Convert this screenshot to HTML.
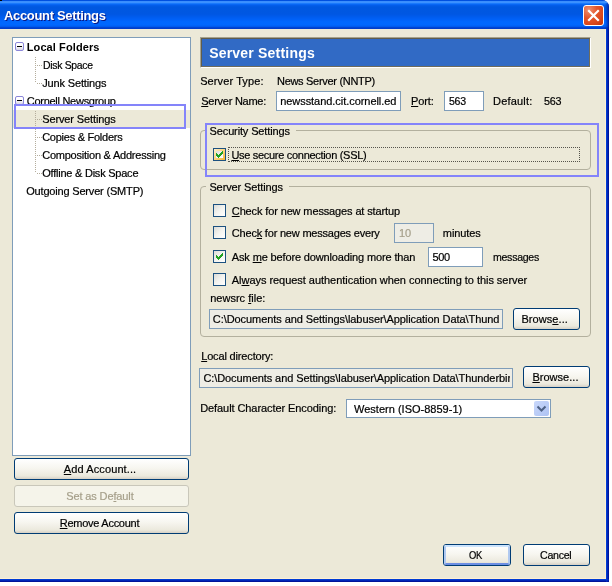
<!DOCTYPE html>
<html>
<head>
<meta charset="utf-8">
<title>Account Settings</title>
<style>
html,body{margin:0;padding:0;}
body{width:612px;height:586px;background:#fff;overflow:hidden;position:relative;font-family:"Liberation Sans",sans-serif;font-size:11px;color:#000;}
.abs{position:absolute;}
#win{will-change:transform;position:absolute;left:0;top:0;width:609px;height:582px;background:linear-gradient(135deg,#0048e0 0%,#0048e0 50%,#0a1e9c 50%,#0a1e9c 100%);border-radius:0 7px 0 0;overflow:hidden;}
#corner-l{position:absolute;left:0;top:0;width:2px;height:1px;background:#000;}
#titlebar{position:absolute;left:0;top:0;width:609px;height:29px;
 background:linear-gradient(to bottom,#0050e0 0px,#0050e0 1px,#3a8dfb 1.2px,#3c91ff 2.5px,#1a7afc 3.5px,#0866f4 4.5px,#035de9 5.5px,#0058e0 7px,#0057e2 14px,#005aea 16px,#0060f6 19px,#0068ff 22px,#0067fe 25px,#005bee 26.5px,#0045d4 27.5px,#003ac6 29px);}
#title{position:absolute;left:4px;top:8px;font-weight:bold;font-size:13px;line-height:16px;letter-spacing:-0.33px;color:#fff;text-shadow:1px 1px 0 #0a1883;white-space:nowrap;}
#close{position:absolute;left:583px;top:5px;width:19px;height:19px;border:1px solid #fff;border-radius:3px;
 background:radial-gradient(circle at 25% 20%,#ef9070 0%,#e3552c 40%,#dd4a1e 65%,#c23208 100%);}
#client{position:absolute;left:0;top:29px;width:605px;height:549px;background:#ece9d8;border-right:1px solid #fff0d2;border-bottom:1px solid #fff0d2;}
#rb{position:absolute;left:606px;top:29px;width:3px;height:553px;background:linear-gradient(to right,#0046e2 0%,#0024b4 55%,#000a8a 100%);}
#bb{position:absolute;left:0;top:579px;width:609px;height:3px;background:linear-gradient(to bottom,#0046e2 0%,#0024b4 55%,#000a8a 100%);}
#bc{position:absolute;left:606px;top:579px;width:3px;height:3px;background:linear-gradient(135deg,#0046e2 0%,#0024b4 55%,#000a8a 100%);}
.t{-webkit-text-stroke:0.2px;position:absolute;white-space:nowrap;line-height:14px;height:14px;}
u{text-decoration:underline;}
#tree{position:absolute;left:12px;top:37px;width:177px;height:417px;border:1px solid #7f9db9;background:#fff;}
.tw{position:absolute;left:0;top:0;}
.pm{position:absolute;width:7px;height:7px;border:1px solid #8a86d8;border-radius:2px;background:linear-gradient(to bottom,#fff 40%,#d8d6e4 100%);}
.pm:after{content:"";position:absolute;left:1px;top:3px;width:5px;height:1px;background:#000;}
.vdot{position:absolute;width:1px;background-image:linear-gradient(to bottom,#b4ad9c 50%,transparent 50%);background-size:1px 2px;}
.hdot{position:absolute;height:1px;background-image:linear-gradient(to right,#b4ad9c 50%,transparent 50%);background-size:2px 1px;}
.btn{position:absolute;box-sizing:border-box;border:1px solid #003c74;border-radius:3px;
 background:linear-gradient(to bottom,#fff 0%,#f7f6f0 45%,#ebe9dd 85%,#d6d0c5 100%);text-align:center;line-height:19px;white-space:nowrap;}
.btn.dis{border-color:#c9c7ba;background:#f5f4ea;color:#a8a696;}
.btn.def:after{content:"";position:absolute;left:0;top:0;right:0;bottom:0;border:2px solid;border-color:#cbe3fd #b0c9f0 #6d8fe3 #b0c9f0;border-radius:2px;}
.inp{position:absolute;box-sizing:border-box;border:1px solid #7f9db9;background:#fff;white-space:nowrap;overflow:hidden;}
.inp.ro{background:#eeede5;}
.cb{position:absolute;width:11px;height:11px;border:1px solid #1c5180;background:linear-gradient(135deg,#dcdcd7 0%,#f3f3ef 50%,#fff 100%);}
.gb{position:absolute;box-sizing:border-box;border:1px solid #b3b09e;border-radius:4px;}
.gl{position:absolute;background:#ece9d8;}
.dt{color:#a59f8a;}
.cb.hot{box-shadow:none;background:linear-gradient(135deg,#fff0cf 0%,#fbd37c 50%,#f8b330 100%);}
.cb.hot:after{content:"";position:absolute;left:2px;top:2px;width:7px;height:7px;background:linear-gradient(135deg,#deded9,#fff);}
.ann{position:absolute;box-sizing:border-box;border:2px solid #8484fa;}
</style>
</head>
<body>
<div id="win">
 <div id="titlebar"></div>
 <div id="corner-l"></div>
 <div class="abs" style="left:605px;top:3px;width:4px;height:26px;background:linear-gradient(to right,rgba(0,20,150,0) 0%,rgba(0,20,150,0.35) 50%,rgba(0,14,130,0.8) 100%)"></div>
 <div id="title">Account Settings</div>
 <div id="close"><svg width="19" height="19" viewBox="0 0 19 19" style="position:absolute;left:0;top:0"><path d="M5 5 L14 14 M14 5 L5 14" stroke="#fff" stroke-width="2.2" stroke-linecap="square" fill="none"/></svg></div>
 <div id="client"></div>
 <div id="rb"></div><div id="bb"></div><div id="bc"></div>

 <!-- tree -->
 <div id="tree"></div>
 <div class="abs" id="sel" style="left:13px;top:110px;width:177px;height:18px;background:#ece9d8"></div>
 <div class="pm" style="left:15px;top:42px"></div>
 <div class="pm" style="left:15px;top:96px"></div>
 <div class="vdot" style="left:35px;top:57px;height:25px"></div>
 <div class="hdot" style="left:37px;top:65px;width:5px"></div>
 <div class="hdot" style="left:37px;top:83px;width:5px"></div>
 <div class="vdot" style="left:35px;top:111px;height:61px"></div>
 <div class="hdot" style="left:37px;top:119px;width:5px"></div>
 <div class="hdot" style="left:37px;top:137px;width:5px"></div>
 <div class="hdot" style="left:37px;top:155px;width:5px"></div>
 <div class="hdot" style="left:37px;top:173px;width:5px"></div>

 <div class="t" id="t1" style="-webkit-text-stroke:0;left:26.8px;top:40px;font-weight:bold;letter-spacing:0.09px">Local Folders</div>
 <div class="t" id="t2" style="left:43.2px;top:58px;letter-spacing:-0.3px;transform:scaleX(0.946);transform-origin:0 0">Disk Space</div>
 <div class="t" id="t3" style="left:42.2px;top:76px;letter-spacing:-0.15px">Junk Settings</div>
 <div class="t" id="t4" style="left:26.8px;top:94px;letter-spacing:-0.28px">Cornell Newsgroup</div>
 <div class="t" id="t5" style="left:42.2px;top:112px;letter-spacing:-0.11px">Server Settings</div>
 <div class="t" id="t6" style="left:42.2px;top:130px;letter-spacing:-0.26px">Copies &amp; Folders</div>
 <div class="t" id="t7" style="left:42.2px;top:148px;letter-spacing:-0.23px">Composition &amp; Addressing</div>
 <div class="t" id="t8" style="left:42.2px;top:166px;letter-spacing:-0.23px">Offline &amp; Disk Space</div>
 <div class="t" id="t9" style="left:26.2px;top:184px;letter-spacing:-0.18px">Outgoing Server (SMTP)</div>
 <div class="ann" id="ann1" style="left:14px;top:104px;width:172px;height:25px"></div>

 <!-- left buttons -->
 <div class="btn" id="b1" style="left:14px;top:458px;width:175px;height:22px"></div>
 <div class="t" id="b1t" style="left:63.8px;top:462px;letter-spacing:0.11px"><u>A</u>dd Account...</div>
 <div class="btn dis" id="b2" style="left:14px;top:485px;width:175px;height:22px"></div>
 <div class="t dt" id="b2t" style="left:66.2px;top:489px;letter-spacing:-0.12px">Set as De<u>f</u>ault</div>
 <div class="btn" id="b3" style="left:14px;top:512px;width:175px;height:22px"></div>
 <div class="t" id="b3t" style="left:59.8px;top:516px;letter-spacing:-0.27px"><u>R</u>emove Account</div>

 <!-- header -->
 <div class="abs" id="hdr" style="left:200px;top:37px;width:391px;height:31px;box-sizing:border-box;background:#316ac5;border:1px solid;border-color:#a5a28e #fff #fff #a5a28e;"></div>
 <div class="abs" id="hdr2" style="left:201px;top:38px;width:389px;height:29px;box-sizing:border-box;border:1px solid;border-color:#605d4e #6f6c5b #6f6c5b #605d4e;"></div>
 <div class="t" id="h1" style="-webkit-text-stroke:0;left:209.2px;top:44px;font-size:14px;font-weight:bold;line-height:18px;height:18px;color:#fff;letter-spacing:0.2px">Server Settings</div>

 <div class="t" id="l1" style="left:200.2px;top:74px;letter-spacing:0.1px">Server Type:</div>
 <div class="t" id="l2" style="left:277px;top:74px;letter-spacing:-0.3px">News Server (NNTP)</div>
 <div class="t" id="l3" style="left:201.2px;top:94px;letter-spacing:-0.25px"><u>S</u>erver Name:</div>
 <div class="inp" id="i1" style="left:276px;top:91px;width:125px;height:20px"></div>
 <div class="t" id="l4" style="left:280.2px;top:94px;letter-spacing:-0.05px">newsstand.cit.cornell.ed</div>
 <div class="t" id="l5" style="left:411px;top:94px;letter-spacing:-0.1px"><u>P</u>ort:</div>
 <div class="inp" id="i2" style="left:444px;top:91px;width:40px;height:20px"></div>
 <div class="t" id="l6" style="left:449.2px;top:94px;letter-spacing:-0.3px;transform:scaleX(0.96);transform-origin:0 0">563</div>
 <div class="t" id="l7" style="left:493px;top:94px;letter-spacing:0.2px">Default:</div>
 <div class="t" id="l8" style="left:544.4px;top:94px;letter-spacing:-0.3px;transform:scaleX(0.978);transform-origin:0 0">563</div>

 <!-- security group -->
 <div class="gb" id="g1" style="left:200px;top:130px;width:391px;height:40px"></div>
 <div class="gl" id="gl1b" style="left:207px;top:124px;width:89px;height:14px"></div>
 <div class="t" id="gl1" style="left:209.6px;top:124px;letter-spacing:-0.14px">Security Settings</div>
 <div class="ann" id="ann2" style="left:205px;top:123px;width:394px;height:54px"></div>
 <div class="cb hot" id="c1" style="left:213px;top:148px"></div>
 <svg class="abs ck" style="left:213px;top:148px" width="13" height="13" viewBox="0 0 13 13"><path d="M3 5h1v1h1v1h1v-1h1v-1h1v-1h1v-1h1v3h-1v1h-1v1h-1v1h-1v1h-1v-1h-1v-1h-1z" fill="#21a121"/></svg>
 <div class="abs" id="foc" style="left:228px;top:147px;width:350px;height:13px;border:1px dotted #55544c"></div>
 <div class="t" id="s1" style="left:231.4px;top:148px;letter-spacing:-0.3px"><u>U</u>se secure connection (SSL)</div>

 <!-- server settings group -->
 <div class="gb" id="g2" style="left:200px;top:186px;width:391px;height:151px"></div>
 <div class="gl" id="gl2b" style="left:206px;top:180px;width:83px;height:14px"></div>
 <div class="t" id="gl2" style="left:209.4px;top:180px;letter-spacing:-0.11px">Server Settings</div>
 <div class="cb" id="c2" style="left:213px;top:204px"></div>
 <div class="t" id="s2" style="left:231.8px;top:204px;letter-spacing:-0.13px"><u>C</u>heck for new messages at startup</div>
 <div class="cb" id="c3" style="left:213px;top:226px"></div>
 <div class="t" id="s3" style="left:231.8px;top:226px;letter-spacing:-0.2px">Chec<u>k</u> for new messages every</div>
 <div class="inp ro" id="i3" style="left:394px;top:223px;width:40px;height:20px"></div>
 <div class="t dt" id="s3b" style="left:399px;top:226px">10</div>
 <div class="t" id="s3c" style="left:442.8px;top:226px;letter-spacing:-0.08px">minutes</div>
 <div class="cb" id="c4" style="left:213px;top:250px"></div>
 <svg class="abs ck" style="left:213px;top:250px" width="13" height="13" viewBox="0 0 13 13"><path d="M3 5h1v1h1v1h1v-1h1v-1h1v-1h1v-1h1v3h-1v1h-1v1h-1v1h-1v1h-1v-1h-1v-1h-1z" fill="#21a121"/></svg>
 <div class="t" id="s4" style="left:231.8px;top:250px;letter-spacing:-0.14px">Ask <u>m</u>e before downloading more than</div>
 <div class="inp" id="i4" style="left:428px;top:247px;width:55px;height:20px"></div>
 <div class="t" id="s4b" style="left:432.4px;top:250px;letter-spacing:-0.3px">500</div>
 <div class="t" id="s4c" style="left:492.8px;top:250px;letter-spacing:-0.3px;transform:scaleX(0.962);transform-origin:0 0">messages</div>
 <div class="cb" id="c5" style="left:213px;top:273px"></div>
 <div class="t" id="s5" style="left:231.8px;top:273px;letter-spacing:-0.04px">Al<u>w</u>ays request authentication when connecting to this server</div>
 <div class="t" id="s6" style="left:210.2px;top:291px;letter-spacing:0.01px">newsrc <u>f</u>ile:</div>
 <div class="inp ro" id="i5" style="left:209px;top:309px;width:294px;height:20px"></div>
 <div class="t" id="s7" style="left:212.8px;top:312px;letter-spacing:-0.07px">C:\Documents and Settings\labuser\Application Data\Thund</div>
 <div class="btn" id="b4" style="left:513px;top:308px;width:67px;height:22px"></div>
 <div class="t" id="b4t" style="left:521.4px;top:312px;letter-spacing:0.07px">Brows<u>e</u>...</div>

 <div class="t" id="d1" style="left:201.2px;top:349px;letter-spacing:-0.16px"><u>L</u>ocal directory:</div>
 <div class="inp ro" id="i6" style="left:199px;top:368px;width:314px;height:20px"></div>
 <div class="abs" id="d2c" style="left:200px;top:369px;width:310px;height:18px;overflow:hidden"><div class="t" id="d2" style="left:3.4px;top:2px;letter-spacing:-0.08px">C:\Documents and Settings\labuser\Application Data\Thunderbird</div></div>
 <div class="btn" id="b5" style="left:523px;top:366px;width:67px;height:22px"></div>
 <div class="t" id="b5t" style="left:532.4px;top:370px;letter-spacing:0.03px"><u>B</u>rowse...</div>

 <div class="t" id="e1" style="left:200.2px;top:401px;letter-spacing:-0.08px">Default Character Encoding:</div>
 <div class="inp" id="i7" style="left:346px;top:399px;width:205px;height:19px"></div>
 <div class="t" id="e2" style="left:354px;top:402px;letter-spacing:0.01px">Western (ISO-8859-1)</div>
 <div class="abs" id="dd" style="left:534px;top:401px;width:15px;height:15px;border-radius:2px;background:linear-gradient(135deg,#c9d8fb,#adc2f3)"></div>
 <svg class="abs" style="left:534px;top:401px" width="15" height="15" viewBox="0 0 15 15"><path d="M3.5 5.5 L7.5 9.5 L11.5 5.5" stroke="#4d6185" stroke-width="2" fill="none"/></svg>

 <div class="btn def" id="b6" style="left:443px;top:544px;width:68px;height:22px"></div>
 <div class="t" id="b6t" style="left:468.8px;top:548px;letter-spacing:-0.3px;transform:scaleX(0.855);transform-origin:0 0">OK</div>
 <div class="btn" id="b7" style="left:523px;top:544px;width:67px;height:22px"></div>
 <div class="t" id="b7t" style="left:540.2px;top:548px;letter-spacing:-0.3px;transform:scaleX(0.967);transform-origin:0 0">Cancel</div>
</div>
</body>
</html>
